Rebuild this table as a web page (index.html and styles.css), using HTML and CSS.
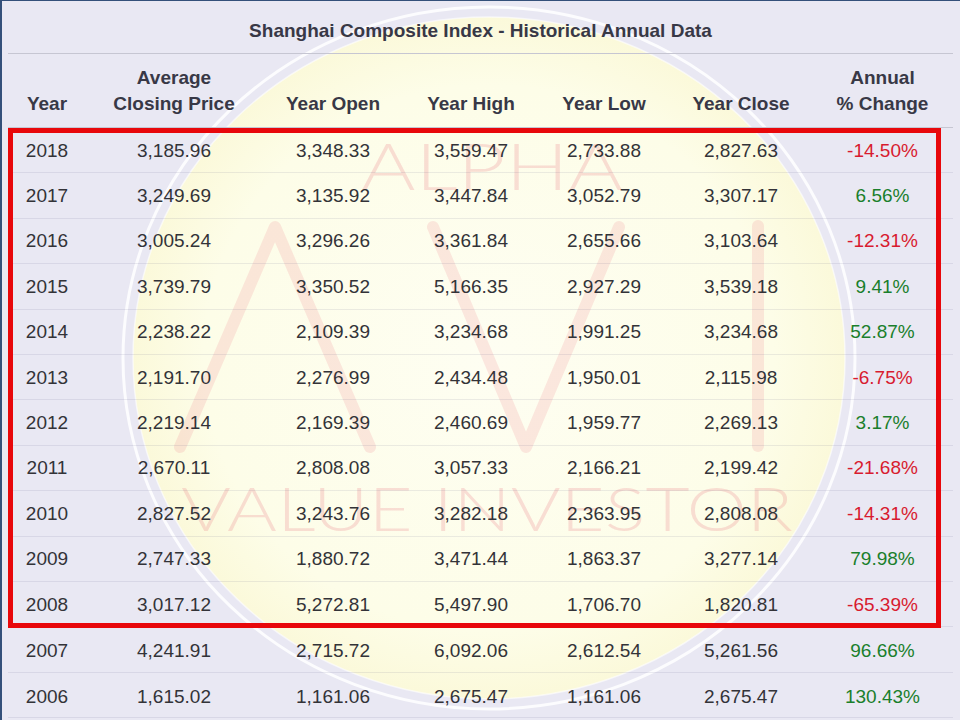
FILE: index.html
```html
<!DOCTYPE html>
<html lang="en">
<head>
<meta charset="utf-8">
<title>Shanghai Composite Index - Historical Annual Data</title>
<link rel="stylesheet" href="styles.css">
</head>
<body>
<div class="page">
  <svg class="watermark" viewBox="0 0 960 720" aria-hidden="true">
    <defs>
      <radialGradient id="yg" cx="50%" cy="50%" r="50%">
        <stop offset="0" stop-color="#fefef2"/>
        <stop offset="0.8" stop-color="#fdfde8"/>
        <stop offset="1" stop-color="#fbf9da"/>
      </radialGradient>
    </defs>
    <ellipse class="wm-ring" cx="489" cy="358" rx="366" ry="351"/>
    <ellipse class="wm-disc" cx="489" cy="358" rx="356" ry="341"/>
    <polyline class="wm-mark" points="180,447 275,227 370,447"/>
    <polyline class="wm-mark" points="433,227 526,447 619,227"/>
    <line class="wm-mark" x1="758" y1="226" x2="758" y2="446"/>
    <text class="wm-text" x="492" y="190" text-anchor="middle" font-size="66" textLength="262" lengthAdjust="spacingAndGlyphs">ALPHA</text>
    <text class="wm-text" x="487" y="531" text-anchor="middle" font-size="62" textLength="612" lengthAdjust="spacingAndGlyphs">VALUE INVESTOR</text>
  </svg>

  <h1 class="title">Shanghai Composite Index - Historical Annual Data</h1>

  <div class="table">
    <div class="grid head">
      <div>Year</div>
      <div>Average<br>Closing Price</div>
      <div>Year Open</div>
      <div>Year High</div>
      <div>Year Low</div>
      <div>Year Close</div>
      <div>Annual<br>% Change</div>
    </div>
    <div class="body">
      <div class="grid row"><div>2018</div><div>3,185.96</div><div>3,348.33</div><div>3,559.47</div><div>2,733.88</div><div>2,827.63</div><div class="neg">-14.50%</div></div>
      <div class="grid row"><div>2017</div><div>3,249.69</div><div>3,135.92</div><div>3,447.84</div><div>3,052.79</div><div>3,307.17</div><div class="pos">6.56%</div></div>
      <div class="grid row"><div>2016</div><div>3,005.24</div><div>3,296.26</div><div>3,361.84</div><div>2,655.66</div><div>3,103.64</div><div class="neg">-12.31%</div></div>
      <div class="grid row"><div>2015</div><div>3,739.79</div><div>3,350.52</div><div>5,166.35</div><div>2,927.29</div><div>3,539.18</div><div class="pos">9.41%</div></div>
      <div class="grid row"><div>2014</div><div>2,238.22</div><div>2,109.39</div><div>3,234.68</div><div>1,991.25</div><div>3,234.68</div><div class="pos">52.87%</div></div>
      <div class="grid row"><div>2013</div><div>2,191.70</div><div>2,276.99</div><div>2,434.48</div><div>1,950.01</div><div>2,115.98</div><div class="neg">-6.75%</div></div>
      <div class="grid row"><div>2012</div><div>2,219.14</div><div>2,169.39</div><div>2,460.69</div><div>1,959.77</div><div>2,269.13</div><div class="pos">3.17%</div></div>
      <div class="grid row"><div>2011</div><div>2,670.11</div><div>2,808.08</div><div>3,057.33</div><div>2,166.21</div><div>2,199.42</div><div class="neg">-21.68%</div></div>
      <div class="grid row"><div>2010</div><div>2,827.52</div><div>3,243.76</div><div>3,282.18</div><div>2,363.95</div><div>2,808.08</div><div class="neg">-14.31%</div></div>
      <div class="grid row"><div>2009</div><div>2,747.33</div><div>1,880.72</div><div>3,471.44</div><div>1,863.37</div><div>3,277.14</div><div class="pos">79.98%</div></div>
      <div class="grid row"><div>2008</div><div>3,017.12</div><div>5,272.81</div><div>5,497.90</div><div>1,706.70</div><div>1,820.81</div><div class="neg">-65.39%</div></div>
      <div class="grid row after"><div>2007</div><div>4,241.91</div><div>2,715.72</div><div>6,092.06</div><div>2,612.54</div><div>5,261.56</div><div class="pos">96.66%</div></div>
      <div class="grid row after"><div>2006</div><div>1,615.02</div><div>1,161.06</div><div>2,675.47</div><div>1,161.06</div><div>2,675.47</div><div class="pos">130.43%</div></div>
    </div>
  </div>

  <div class="highlight"></div>
</div>
</body>
</html>
```

FILE: styles.css
```css
body {
  margin: 0;
  font-family: "Liberation Sans", Arial, sans-serif;
}

.page {
  position: relative;
  width: 960px;
  height: 720px;
  box-sizing: border-box;
  border-top: 1px solid #34507a;
  border-left: 2px solid #34507a;
  background: #e9e8f3;
  overflow: hidden;
  color: #333338;
}

.watermark {
  position: absolute;
  left: -2px;
  top: -1px;
  width: 960px;
  height: 720px;
}

.wm-ring {
  fill: none;
  stroke: #ffffff;
  stroke-width: 3;
  stroke-opacity: 0.85;
}

.wm-disc {
  fill: url(#yg);
  stroke: #ffffff;
  stroke-width: 1.5;
  stroke-opacity: 0.6;
}

.wm-mark {
  fill: none;
  stroke: rgba(236, 130, 140, 0.18);
  stroke-width: 12;
  stroke-linecap: round;
  stroke-linejoin: round;
}

.wm-text {
  font-family: "Lato", "DejaVu Sans", sans-serif;
  font-weight: 300;
  fill: rgba(232, 110, 125, 0.22);
}

.title {
  position: relative;
  margin: 0 7px 0 6px;
  height: 53px;
  box-sizing: border-box;
  padding-top: 8px;
  border-bottom: 1px solid #c6c6d2;
  font-size: 19px;
  line-height: 44px;
  font-weight: bold;
  text-align: center;
  color: #383846;
}

.table {
  position: relative;
  margin-left: 6px;
  width: 945px;
  font-size: 19px;
}

.grid {
  display: grid;
  grid-template-columns: 78px 176px 142px 134px 132px 142px 141px;
  text-align: center;
}

.head {
  height: 74px;
  box-sizing: border-box;
  padding-bottom: 10px;
  border-bottom: 1px solid #c6c6d2;
  align-items: end;
  line-height: 26px;
  font-weight: bold;
  color: #383846;
}

.body {
  display: grid;
  grid-auto-rows: 45.4px;
}

.row {
  box-sizing: border-box;
  padding-top: 1px;
  border-bottom: 1px solid rgba(70, 70, 120, 0.1);
  align-items: center;
  line-height: 22px;
}

.row.after {
  padding-top: 4px;
}

.neg {
  color: #d81b2f;
}

.pos {
  color: #1a7f2c;
}

.highlight {
  position: absolute;
  left: 6px;
  top: 127px;
  width: 933px;
  height: 500px;
  box-sizing: border-box;
  border: 5px solid #e8070b;
}
```
